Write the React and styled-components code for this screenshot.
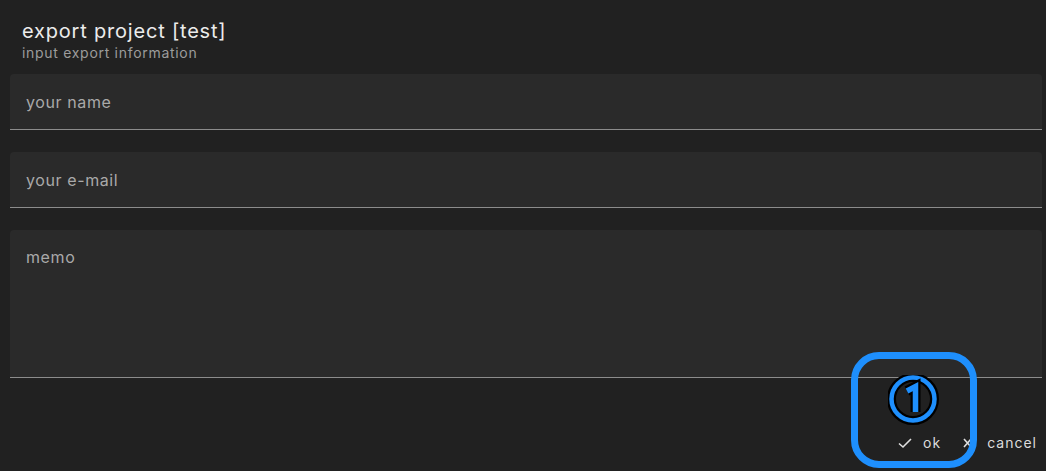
import React from "react";
import styled, { createGlobalStyle } from "styled-components";

const Global = createGlobalStyle`
  html, body { margin: 0; padding: 0; background: #212121; }
  body { font-family: Inter, "Noto Sans", sans-serif; color: #e8e8e8; }
  * { box-sizing: border-box; }
`;

const Dialog = styled.div`
  position: relative;
  width: 1046px;
  height: 471px;
  padding: 19px 4px 0 10px;
  display: flex;
  flex-direction: column;
  overflow: hidden;
`;

const Header = styled.div`
  padding-left: 12px;
  display: flex;
  flex-direction: column;
`;

const Title = styled.div`
  font-size: 20px;
  line-height: 24px;
  letter-spacing: 0.8px;
  color: #ececec;
`;

const Subtitle = styled.div`
  font-size: 14px;
  line-height: 18px;
  letter-spacing: 0.7px;
  color: #9c9c9c;
  margin-top: 1px;
`;

const Fields = styled.div`
  margin-top: 12px;
  display: flex;
  flex-direction: column;
  gap: 22px;
`;

const Field = styled.div`
  height: ${(p) => p.$h}px;
  background: #2a2a2a;
  border-radius: 4px 4px 0 0;
  border-bottom: 1px solid #8c8c8c;
  padding: ${(p) => (p.$multi ? "17px 16px" : "0 16px")};
  display: flex;
  align-items: ${(p) => (p.$multi ? "flex-start" : "center")};
  font-size: 16px;
  letter-spacing: 0.6px;
  color: #a9a9a9;
`;

const Actions = styled.div`
  margin-top: 56px;
  display: flex;
  justify-content: flex-end;
  gap: 22px;
  padding-right: 5px;
`;

const ActionButton = styled.div`
  display: flex;
  align-items: center;
  gap: ${(p) => p.$gap}px;
  font-size: 14px;
  letter-spacing: 1px;
  color: #dcdcdc;
`;

const Highlight = styled.div`
  position: absolute;
  left: 851px;
  top: 352px;
  width: 126px;
  height: 116px;
  border: 7px solid #1e8ffd;
  border-radius: 28px;
  pointer-events: none;
`;

const Badge = styled.div`
  position: absolute;
  left: 888px;
  top: 375px;
  width: 52px;
  height: 52px;
`;

export default function App() {
  return (
    <>
      <Global />
      <Dialog>
        <Header>
          <Title>export project [test]</Title>
          <Subtitle>input export information</Subtitle>
        </Header>
        <Fields>
          <Field $h={56}>your name</Field>
          <Field $h={56}>your e-mail</Field>
          <Field $h={148} $multi>memo</Field>
        </Fields>
        <Actions>
          <ActionButton $gap={11}>
            <svg width="14" height="14" viewBox="0 0 14 14" fill="none" stroke="#e0e0e0" strokeWidth="1.6">
              <path d="M1 7.5 L5 11 L13 3" />
            </svg>
            ok
          </ActionButton>
          <ActionButton $gap={15}>
            <svg width="9" height="10" viewBox="0 0 9 10" fill="none" stroke="#e0e0e0" strokeWidth="1.6">
              <path d="M1 1 L8 9 M8 1 L1 9" />
            </svg>
            cancel
          </ActionButton>
        </Actions>
        <Highlight />
        <Badge>
          <svg width="52" height="52" viewBox="0 0 52 52">
            <circle cx="25" cy="24" r="21.5" fill="none" stroke="#000" strokeWidth="9" />
            <circle cx="25" cy="24" r="21.5" fill="none" stroke="#1e8ffd" strokeWidth="4.5" />
            <path d="M19 16 L27.5 11.5 L27.5 37" fill="none" stroke="#000" strokeWidth="10" strokeLinejoin="miter" />
            <path d="M19 16 L27.5 11.5 L27.5 37" fill="none" stroke="#1e8ffd" strokeWidth="5.5" strokeLinejoin="miter" />
          </svg>
        </Badge>
      </Dialog>
    </>
  );
}
